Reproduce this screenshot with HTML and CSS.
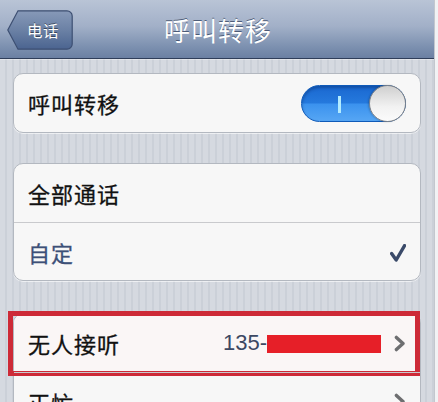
FILE: index.html
```html
<!DOCTYPE html>
<html lang="zh-CN">
<head>
<meta charset="utf-8">
<title>呼叫转移</title>
<link rel="stylesheet" href="styles.css">
</head>
<body>
<div class="page">
  <div class="screen">
    <header class="navbar">
      <div class="nav-left">
        <a class="back-btn">
          <svg class="back-shape" viewBox="0 0 66 40" preserveAspectRatio="none">
            <defs>
              <linearGradient id="bg" x1="0" y1="0" x2="0" y2="1">
                <stop offset="0" stop-color="#8799b8"/>
                <stop offset="0.5" stop-color="#6b81a5"/>
                <stop offset="1" stop-color="#4b6490"/>
              </linearGradient>
            </defs>
            <path d="M11 0.8 H60 A5.2 5.2 0 0 1 65.2 6 V34 A5.2 5.2 0 0 1 60 39.2 H11 L0.8 20 Z" fill="url(#bg)" stroke="#3d4f72" stroke-width="1.2"/>
          </svg>
          <span class="back-label">电话</span>
        </a>
      </div>
      <h1 class="nav-title">呼叫转移</h1>
      <div class="nav-right"></div>
    </header>

    <main class="content">
      <section class="group">
        <div class="row">
          <span class="label">呼叫转移</span>
          <div class="switch">
            <span class="switch-on"></span>
            <span class="switch-knob"></span>
          </div>
        </div>
      </section>

      <section class="group">
        <div class="row">
          <span class="label">全部通话</span>
        </div>
        <div class="row">
          <span class="label label-selected">自定</span>
          <svg class="check" viewBox="0 0 16 18"><path d="M1.6 9.6 L6.2 16 L14.6 1.6" fill="none" stroke="#3a4a69" stroke-width="3.4" stroke-linecap="round" stroke-linejoin="round"/></svg>
        </div>
      </section>

      <section class="group group-last">
        <div class="row row-marked">
          <span class="label">无人接听</span>
          <span class="value">135-<span class="redact"></span></span>
          <svg class="chevron" viewBox="0 0 12 17"><path d="M2.4 2.4 L9 8.5 L2.4 14.6" fill="none" stroke="#6d6e70" stroke-width="3.4" stroke-linecap="round" stroke-linejoin="round"/></svg>
          <span class="mark-box"></span>
        </div>
        <div class="row">
          <span class="label">正忙</span>
          <svg class="chevron" viewBox="0 0 12 17"><path d="M2.4 2.4 L9 8.5 L2.4 14.6" fill="none" stroke="#6d6e70" stroke-width="3.4" stroke-linecap="round" stroke-linejoin="round"/></svg>
        </div>
      </section>
    </main>
  </div>
  <div class="edge"></div>
</div>
</body>
</html>
```

FILE: styles.css
```css
* { box-sizing: border-box; }

html, body {
  margin: 0;
  padding: 0;
}

body {
  background: #eef0f2;
  font-family: "Liberation Sans", "Noto Sans CJK SC", sans-serif;
}

.page {
  display: flex;
  height: 402px;
  overflow: hidden;
}

.screen {
  width: 434px;
  flex: none;
  height: 402px;
  overflow: hidden;
  background: repeating-linear-gradient(90deg, #d5d9e0 0 5px, #cbd0d8 5px 7px);
}

.edge {
  flex: 1;
  border-left: 1px solid #c3c7ce;
  background: #f1f2f4;
}

/* nav bar */
.navbar {
  height: 59px;
  display: grid;
  grid-template-columns: 1fr auto 1fr;
  align-items: center;
  background: linear-gradient(#b9c4d6 0%, #a2b0c8 45%, #7d91b0 80%, #6b80a3 100%);
  border-bottom: 1px solid #2f3e5a;
  box-shadow: 0 1px 0 rgba(255,255,255,0.35);
}

.nav-left {
  padding-left: 7px;
  padding-top: 1px;
}

.back-btn {
  position: relative;
  display: flex;
  align-items: center;
  width: 66px;
  height: 40px;
  padding-left: 20px;
}

.back-shape {
  position: absolute;
  left: 0;
  top: 0;
  width: 66px;
  height: 40px;
}

.back-label {
  position: relative;
  color: #fff;
  font-size: 15.5px;
  letter-spacing: 0.5px;
  text-shadow: 0 -1px 0 rgba(0,0,0,0.45);
}

.nav-title {
  margin: 0;
  color: #fff;
  font-size: 26px;
  font-weight: 400;
  letter-spacing: 1px;
  text-shadow: 0 -1px 0 rgba(40,55,85,0.7);
  padding-left: 2px;
}

/* content */
.content {
  padding: 14px 13px 0;
}

.group {
  background: #f7f7f7;
  border: 1px solid #b3b8c0;
  border-radius: 10px;
  box-shadow: 0 1px 0 rgba(255,255,255,0.6);
}

.group + .group {
  margin-top: 30px;
}

.group-last {
  margin-top: 32px !important;
}

.row {
  position: relative;
  height: 58px;
  display: flex;
  align-items: center;
  padding: 0 14px 0 14px;
}

.row + .row {
  border-top: 1px solid #c9cacd;
}

.label {
  flex: 1;
  font-size: 22px;
  font-weight: 400;
  color: #111;
  letter-spacing: 1px;
  -webkit-text-stroke: 0.3px #111;
}

.label-selected {
  color: #3d5078;
  -webkit-text-stroke: 0.3px #3d5078;
}

/* switch */
.switch {
  position: relative;
  width: 105px;
  height: 37px;
  margin-right: 0;
  border-radius: 19px;
  border: 1px solid #0f5ab8;
  background: linear-gradient(#1a68d0 0%, #2579dd 48%, #3b92ee 52%, #56a6f4 100%);
  box-shadow: inset 0 2px 3px rgba(0,30,80,0.35);
}

.switch-on {
  position: absolute;
  left: 36px;
  top: 10px;
  width: 2.5px;
  height: 17px;
  background: #b3ecff;
}

.switch-knob {
  position: absolute;
  right: -1px;
  top: -1px;
  width: 37px;
  height: 37px;
  border-radius: 50%;
  border: 1px solid #7f8287;
  background: linear-gradient(#cfcfcf, #f2f2f2 60%, #fbfbfb);
  box-shadow: -1px 0 2px rgba(0,0,0,0.2);
}

.check {
  width: 16px;
  height: 18px;
  margin-top: 2px;
}

.value {
  display: flex;
  align-items: center;
  font-size: 22px;
  color: #3c4863;
  margin-right: 13px;
}

.redact {
  display: inline-block;
  width: 114px;
  height: 18px;
  background: #e61f28;
  margin-top: 2px;
}

.chevron {
  width: 12px;
  height: 17px;
}

.row-marked {
  background: #faf6f6;
  border-radius: 9px 9px 0 0;
}

.mark-box {
  position: absolute;
  left: -6px;
  right: 0;
  top: -3px;
  bottom: -4px;
  border: 5px solid #cd2a37;
  pointer-events: none;
}
```
